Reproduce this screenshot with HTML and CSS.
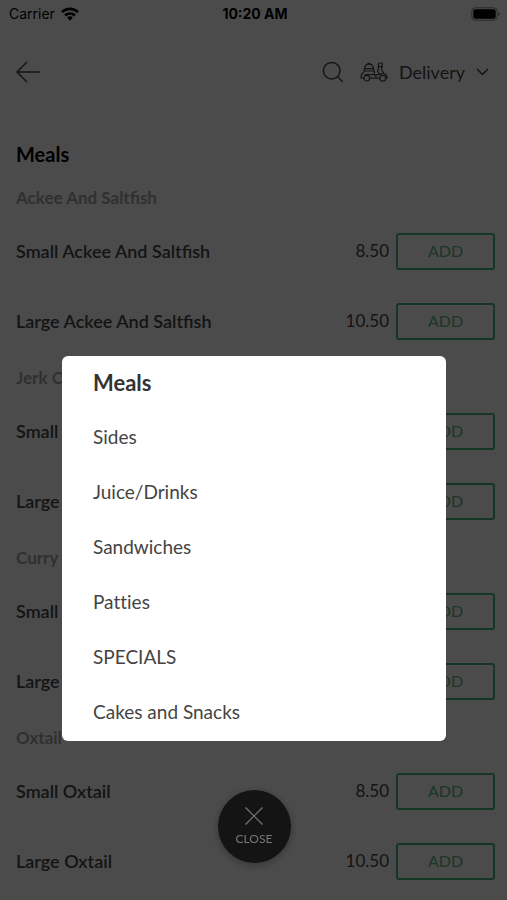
FILE: index.html
```html
<!DOCTYPE html>
<html lang="en">
<head>
<meta charset="utf-8">
<meta name="viewport" content="width=device-width, initial-scale=1">
<title>Menu</title>
<link rel="stylesheet" href="styles.css">
</head>
<body>
<div class="status">
  <div class="carrier"><span>Carrier</span>
    <svg width="18" height="14" viewBox="0 0 18 14" aria-hidden="true"><g fill="none" stroke="#000" stroke-width="2.6"><path d="M1 5.2a11.3 11.3 0 0 1 16 0"/><path d="M4 8.5a7.2 7.2 0 0 1 10 0"/></g><path d="M6.1 10.6a4.2 4.2 0 0 1 5.8 0L9 13.7z"/></svg>
  </div>
  <time class="clock">10:20 AM</time>
  <div class="battery">
    <svg width="30" height="14" viewBox="0 0 30 14" aria-hidden="true"><rect x=".8" y=".8" width="25.4" height="12.4" rx="3.5" fill="none" stroke="#888"/><rect x="2.3" y="2.3" width="22.4" height="9.4" rx="2"/><path d="M27.5 4.8q3 2.2 0 4.4z" fill="#888"/></svg>
  </div>
</div>
<header class="toolbar">
  <button class="icon-btn" type="button" aria-label="Back">
    <svg width="26" height="22" viewBox="0 0 26 22"><path d="M12 1L2 11l10 10M2 11h23" class="line"/></svg>
  </button>
  <div class="actions">
    <button class="icon-btn" type="button" aria-label="Search">
      <svg width="22" height="22" viewBox="0 0 22 22"><circle cx="9.7" cy="9.7" r="8.3" class="line"/><path d="M15.7 15.7l5 5" class="line"/></svg>
    </button>
    <button class="delivery" type="button">
      <svg width="28" height="20" viewBox="0 0 28 20"><g class="line thin"><path d="M4.5 9V7Q4.8 2.2 9 2.2T13.5 7v2M7 2.4Q9 .4 11 2.4M3.6 9h10.8v3.6M4.5 6.6h9M4.4 9.2Q1 11.5 1 16h3M9.6 16.2h10.2M4.6 12.6h9.8q1.6 0 1.6 3.6M16 12.6h4L17.6 9l.8-2.5V2.4Q18.4 1 19.8 1h2.4v3.6h-3.6M22 4.6l-.6 2.6 2.4 4.4q3.4 1 3.4 4.2h-1.4M20 12.6q2-1.6 4-1"/><circle cx="6.8" cy="16.2" r="2.8"/><circle cx="22.8" cy="16.2" r="2.9"/></g></svg>
      <span>Delivery</span>
      <svg width="13" height="8" viewBox="0 0 13 8"><path d="M1 1l5.5 5.5L12 1" class="line"/></svg>
    </button>
  </div>
</header>
<main class="menu">
  <h1>Meals</h1>
  <section>
    <h2>Ackee And Saltfish</h2>
    <ul>
      <li><span class="name">Small Ackee And Saltfish</span><span class="price">8.50</span><button type="button">ADD</button></li>
      <li><span class="name">Large Ackee And Saltfish</span><span class="price">10.50</span><button type="button">ADD</button></li>
    </ul>
  </section>
  <section>
    <h2>Jerk C</h2>
    <ul>
      <li><span class="name">Small</span><button type="button">ADD</button></li>
      <li><span class="name">Large</span><button type="button">ADD</button></li>
    </ul>
  </section>
  <section>
    <h2>Curry</h2>
    <ul>
      <li><span class="name">Small</span><button type="button">ADD</button></li>
      <li><span class="name">Large</span><button type="button">ADD</button></li>
    </ul>
  </section>
  <section>
    <h2>Oxtail</h2>
    <ul>
      <li><span class="name">Small Oxtail</span><span class="price">8.50</span><button type="button">ADD</button></li>
      <li><span class="name">Large Oxtail</span><span class="price">10.50</span><button type="button">ADD</button></li>
    </ul>
  </section>
</main>
<div class="overlay">
  <nav class="sheet" aria-label="Menu categories">
    <a class="current" href="#meals">Meals</a>
    <a href="#sides">Sides</a>
    <a href="#drinks">Juice/Drinks</a>
    <a href="#sandwiches">Sandwiches</a>
    <a href="#patties">Patties</a>
    <a href="#specials">SPECIALS</a>
    <a href="#cakes">Cakes and Snacks</a>
  </nav>
  <button class="close" type="button">
    <svg width="18" height="18" viewBox="0 0 18 18" aria-hidden="true"><path d="M.5 .5l17 17M17.5 .5l-17 17" fill="none" stroke="currentColor" stroke-width="1.2"/></svg>
    <span>CLOSE</span>
  </button>
</div>
</body>
</html>
```
FILE: styles.css
```css
* {
  box-sizing: border-box;
}

body {
  margin: 0;
  height: 100vh;
  overflow: hidden;
  background: #fcfcfc;
  color: #444;
  font-family: Lato, sans-serif;
  font-size: 18px;
  line-height: 24px;
}

button {
  padding: 0;
  border: 0;
  background: none;
  color: inherit;
  font: inherit;
}

svg {
  display: block;
}

.line {
  fill: none;
  stroke: #444;
  stroke-width: 1.5;
}

.thin {
  stroke-width: 1.2;
}

.status {
  display: grid;
  grid-template-columns: 1fr auto 1fr;
  align-items: center;
  height: 28px;
  padding: 0 6px 0 9px;
  font-family: Inter, sans-serif;
  font-size: 14px;
  color: #000;
}

.carrier {
  display: flex;
  align-items: center;
  gap: 6px;
}

.clock {
  font-weight: 700;
}

.battery {
  justify-self: end;
}

.toolbar {
  display: flex;
  align-items: center;
  justify-content: space-between;
  height: 88px;
  padding: 0 18px 0 15px;
}

.actions,
.delivery {
  display: flex;
  align-items: center;
}

.actions {
  gap: 16px;
}

.delivery {
  gap: 11px;
}

.menu {
  padding: 24px 12px 0 16px;
}

h1 {
  margin: 0 0 16px;
  color: #000;
  font-size: 20px;
  line-height: 28px;
}

section {
  height: 180px;
}

h2 {
  margin: 0;
  padding-top: 2px;
  color: #a0a0a0;
  font-size: 17px;
  font-weight: 700;
  line-height: 24px;
}

ul {
  margin: 6px 0 0;
  padding: 0;
  list-style: none;
}

li {
  display: flex;
  align-items: center;
  gap: 7px;
  height: 70px;
}

.name {
  flex: 1;
  font-weight: 600;
}

.price {
  font-size: 17px;
}

li button {
  width: 99px;
  height: 37px;
  border: 2px solid #4ab47c;
  border-radius: 3px;
  color: #58b882;
  font-size: 16px;
}

.overlay {
  position: fixed;
  inset: 0;
  display: flex;
  flex-direction: column;
  align-items: center;
  justify-content: flex-end;
  gap: 49px;
  padding: 0 61px 37px 62px;
  background: rgba(0, 0, 0, 0.7);
}

.sheet {
  display: flex;
  flex-direction: column;
  align-self: stretch;
  padding-bottom: 2px;
  border-radius: 6px;
  background: #fff;
}

.sheet a {
  padding: 0 31px;
  color: #444;
  font-size: 19px;
  font-variant-ligatures: none;
  line-height: 55px;
  text-decoration: none;
}

.sheet .current {
  color: #333;
  font-size: 22px;
  font-weight: 700;
  line-height: 53px;
}

.close {
  display: flex;
  flex-direction: column;
  align-items: center;
  justify-content: center;
  gap: 6px;
  width: 73px;
  height: 73px;
  border-radius: 50%;
  background: #141414;
  box-shadow: 0 2px 8px rgba(0, 0, 0, 0.3);
  color: #777;
  font-size: 12px;
  line-height: 16px;
}
```
